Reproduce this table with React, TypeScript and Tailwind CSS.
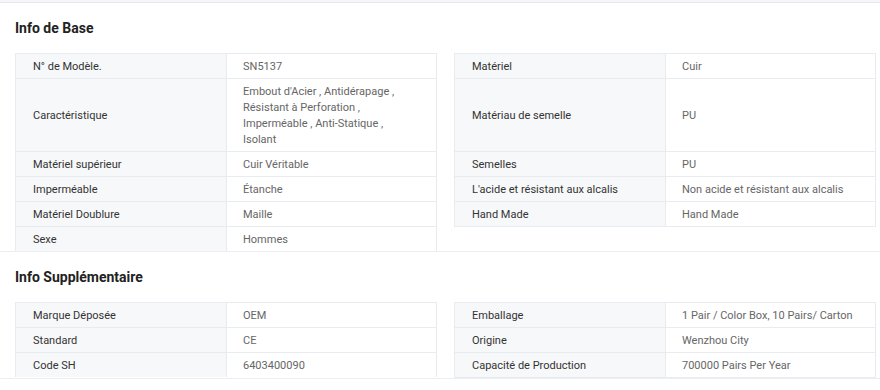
import React from "react";

type Row = { label: string; value: string[]; tall?: boolean };

const BASE_LEFT: Row[] = [
  { label: "N° de Modèle.", value: ["SN5137"] },
  {
    label: "Caractéristique",
    value: [
      "Embout d'Acier , Antidérapage ,",
      "Résistant à Perforation ,",
      "Imperméable , Anti-Statique ,",
      "Isolant",
    ],
    tall: true,
  },
  { label: "Matériel supérieur", value: ["Cuir Véritable"] },
  { label: "Imperméable", value: ["Étanche"] },
  { label: "Matériel Doublure", value: ["Maille"] },
  { label: "Sexe", value: ["Hommes"] },
];

const BASE_RIGHT: Row[] = [
  { label: "Matériel", value: ["Cuir"] },
  { label: "Matériau de semelle", value: ["PU"], tall: true },
  { label: "Semelles", value: ["PU"] },
  { label: "L'acide et résistant aux alcalis", value: ["Non acide et résistant aux alcalis"] },
  { label: "Hand Made", value: ["Hand Made"] },
];

const EXTRA_LEFT: Row[] = [
  { label: "Marque Déposée", value: ["OEM"] },
  { label: "Standard", value: ["CE"] },
  { label: "Code SH", value: ["6403400090"] },
];

const EXTRA_RIGHT: Row[] = [
  { label: "Emballage", value: ["1 Pair / Color Box, 10 Pairs/ Carton"] },
  { label: "Origine", value: ["Wenzhou City"] },
  { label: "Capacité de Production", value: ["700000 Pairs Per Year"] },
];

function SpecTable({ rows, closed }: { rows: Row[]; closed?: boolean }) {
  return (
    <div
      className={
        "w-[422px] border-x border-t border-[#e8ebf0] " +
        (closed ? "border-b" : "")
      }
    >
      {rows.map((row, i) => (
        <div
          key={row.label}
          className={
            "flex " +
            (i === 0
              ? row.tall
                ? "h-[72px]"
                : "h-6"
              : row.tall
                ? "h-[73px] border-t border-[#e8ebf0]"
                : "h-[25px] border-t border-[#e8ebf0]")
          }
        >
          <div className="flex w-[211px] shrink-0 items-center border-r border-[#e8ebf0] bg-[#f7f8fa] pl-[17px] pr-3 pt-px text-[#333]">
            {row.label}
          </div>
          <div className="flex flex-1 flex-col justify-center whitespace-nowrap pl-4 pr-2 pt-px text-[#666]">
            {row.value.map((line) => (
              <span key={line}>{line}</span>
            ))}
          </div>
        </div>
      ))}
    </div>
  );
}

function Section({
  title,
  left,
  right,
}: {
  title: string;
  left: Row[];
  right: Row[];
}) {
  return (
    <section className="border-b border-[#eceef2] pl-[15px]">
      <h2 className="flex h-[50px] items-center text-[14px] font-bold text-[#222]">
        {title}
      </h2>
      <div className="flex items-start gap-[17px]">
        <SpecTable rows={left} />
        <SpecTable rows={right} closed />
      </div>
    </section>
  );
}

export default function App() {
  return (
    <div
      className="h-[390px] w-[880px] overflow-hidden bg-white text-[11px] leading-4"
      style={{ fontFamily: "Roboto, 'Liberation Sans', sans-serif" }}
    >
      <div className="h-[3px] border-b border-[#e6e8ee] bg-[#f5f6f9]" />
      <Section title="Info de Base" left={BASE_LEFT} right={BASE_RIGHT} />
      <Section title="Info Supplémentaire" left={EXTRA_LEFT} right={EXTRA_RIGHT} />
    </div>
  );
}
